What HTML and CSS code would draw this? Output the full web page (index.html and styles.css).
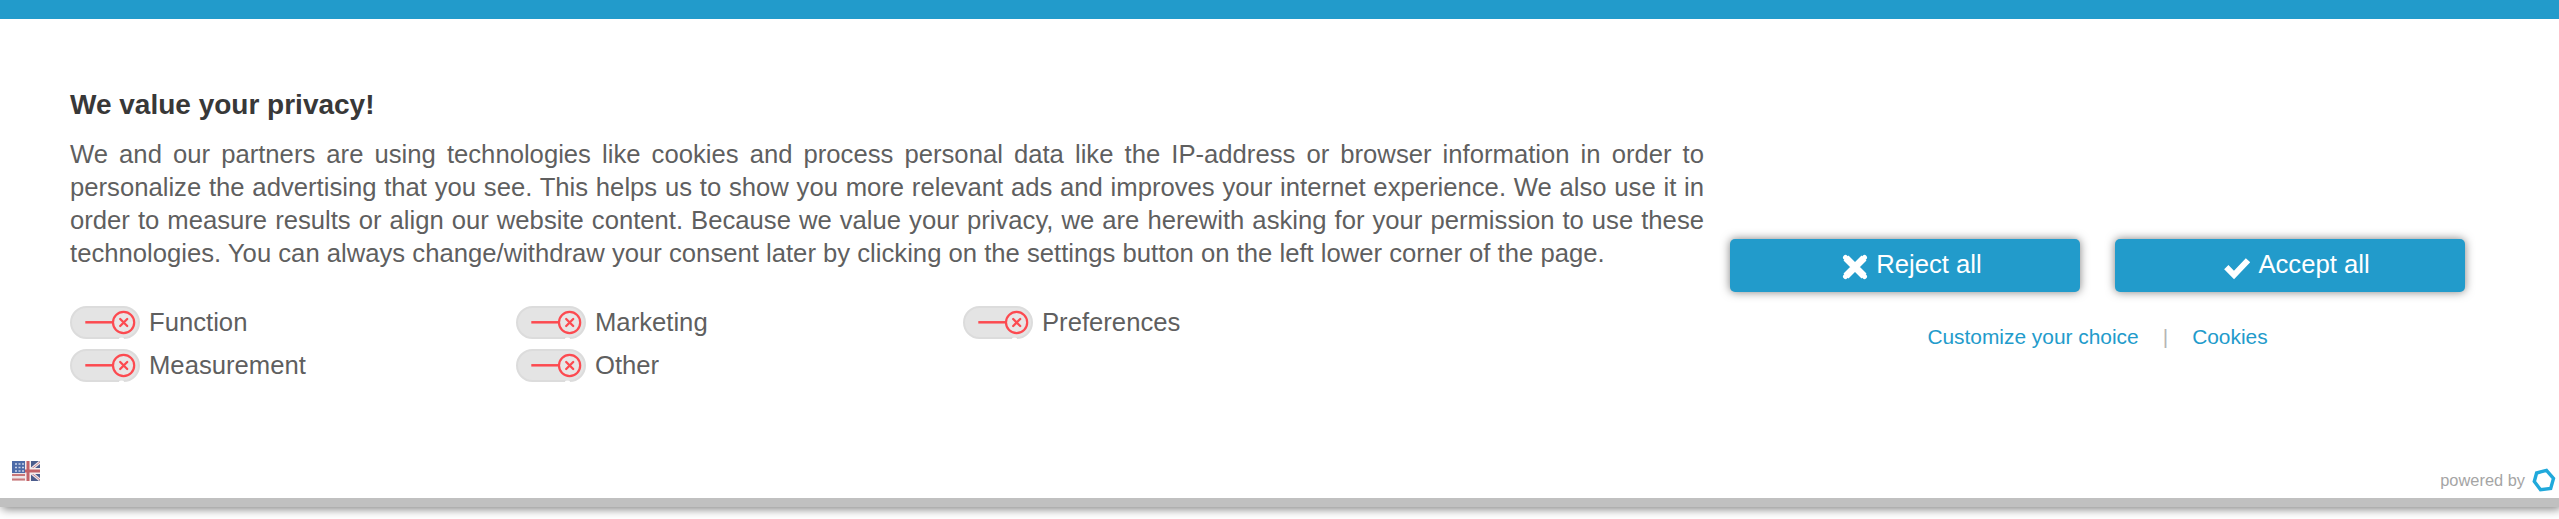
FILE: index.html
```html
<!DOCTYPE html>
<html lang="en">
<head>
<meta charset="utf-8">
<title>Privacy</title>
<link rel="stylesheet" href="styles.css">
</head>
<body>
<svg width="0" height="0" class="defs">
  <symbol id="toggle" viewBox="0 0 70 33">
    <rect x="1" y="1" width="68" height="31" rx="15.5" fill="#e4e4e4" stroke="#dcdcdc" stroke-width="2"/>
    <ellipse cx="51.5" cy="32.6" rx="2.5" ry="1.2" fill="#fff"/>
    <path d="M15.3 16.3H43" stroke="#fc4a50" stroke-width="2.5"/>
    <circle cx="53.6" cy="16.5" r="10.6" fill="#e8e6e6" stroke="#fc4a50" stroke-width="2.2"/>
    <path d="M50.2 13l7 7m0-7l-7 7" stroke="#fc4a50" stroke-width="2.3" stroke-linecap="round"/>
  </symbol>
</svg>
<section class="banner">
  <div class="content">
    <div class="info">
      <h1 class="title">We value your privacy!</h1>
      <p class="text">We and our partners are using technologies like cookies and process personal data like the IP-address or browser information in order to personalize the advertising that you see. This helps us to show you more relevant ads and improves your internet experience. We also use it in order to measure results or align our website content. Because we value your privacy, we are herewith asking for your permission to use these technologies. You can always change/withdraw your consent later by clicking on the settings button on the left lower corner of the page.</p>
      <div class="purposes">
        <div class="purpose"><svg class="toggle"><use href="#toggle"/></svg><span>Function</span></div>
        <div class="purpose"><svg class="toggle"><use href="#toggle"/></svg><span>Marketing</span></div>
        <div class="purpose"><svg class="toggle"><use href="#toggle"/></svg><span>Preferences</span></div>
        <div class="purpose"><svg class="toggle"><use href="#toggle"/></svg><span>Measurement</span></div>
        <div class="purpose"><svg class="toggle"><use href="#toggle"/></svg><span>Other</span></div>
      </div>
    </div>
    <div class="actions">
      <div class="buttons">
        <a class="button"><svg class="icon" viewBox="0 0 26 26"><path d="M4 4l18 18M22 4L4 22" stroke="#fff" stroke-width="7"/><path d="M3.500 3.500l19 19M22.500 3.500l-19 19" stroke="#fff" stroke-width="5" stroke-linecap="round"/></svg><span>Reject all</span></a>
        <a class="button"><svg class="icon" viewBox="0 0 26 26"><path d="M2.300 13.200l7.700 7.800L24 6.200" fill="none" stroke="#fff" stroke-width="6"/></svg><span>Accept all</span></a>
      </div>
      <div class="links"><a>Customize your choice</a><span class="divider">|</span><a>Cookies</a></div>
    </div>
  </div>
  <div class="footer">
    <svg class="flag" viewBox="0 0 28 20">
      <rect width="28" height="20" fill="#f0e6e8"/>
      <rect width="13" height="12" fill="#4d6ba8"/>
      <path d="M3 3h9M3 6.500h9M3 10h9" stroke="#c9d3e8" stroke-width="1.500" stroke-dasharray="2 1.500"/>
      <path d="M0 14h14M0 18.500h14" stroke="#c97779" stroke-width="2"/>
      <path d="M17 0h11v20H17z" fill="#4b5c8c"/>
      <path d="M17 10L28 1M17 10l11 9" stroke="#efe5ea" stroke-width="3"/>
      <path d="M17 10L28 1M17 10l11 9" stroke="#c98990" stroke-width="1"/>
      <path d="M16 0v20M13 10h15" stroke="#f5eeee" stroke-width="6"/>
      <path d="M16 0v20M13 10h15" stroke="#c46268" stroke-width="3"/>
    </svg>
    <div class="powered"><span>powered by</span><svg class="logo" viewBox="0 0 24 24"><path d="M4.600 5L14.500 2.400 21.500 10.500 18.700 20.500 8.500 21.700 2.300 13.500z" fill="none" stroke="#20a9db" stroke-width="3.400"/></svg></div>
  </div>
</section>
</body>
</html>
```
FILE: styles.css
```css
* { box-sizing: border-box; }
body {
  margin: 0;
  height: 519px;
  overflow: hidden;
  background: #fff;
  color: #5f5f5f;
  font: 25.66px/33px "Liberation Sans", Arial, sans-serif;
}
.defs { position: absolute; }
.banner {
  display: flex;
  flex-direction: column;
  justify-content: space-between;
  height: 507px;
  border-top: 19px solid #229bcb;
  border-bottom: 9px solid #c0c0c0;
  box-shadow: 2px 2px 9px rgba(0, 0, 0, .5);
}
.content {
  display: flex;
  padding: 69px 0 0 70px;
}
.info { width: 1634px; }
.title {
  margin: 0 0 17px;
  font-size: 28px;
  line-height: 33px;
  color: #383838;
}
.text { margin: 0 0 36px; text-align: justify; }
.purposes {
  display: grid;
  grid-template-columns: 446px 447px 446px;
  grid-auto-rows: 43px;
}
.purpose { display: flex; gap: 9px; }
.toggle { width: 70px; height: 33px; }
.actions { width: 735px; margin: 151px 0 0 26px; }
.buttons { display: flex; gap: 35px; }
.button {
  display: flex;
  justify-content: center;
  gap: 8px;
  width: 350px;
  height: 53px;
  padding: 9px 0 0 14px;
  border-radius: 5px;
  background: #229bcb;
  color: #fff;
  box-shadow: 0 0 10px rgba(0, 0, 0, .5);
}
.icon { width: 26px; height: 26px; margin-top: 6px; }
.links {
  display: flex;
  justify-content: center;
  margin-top: 29px;
  font-size: 20.9px;
  color: #229bcb;
  line-height: 32px;
}
.divider { margin: 0 24px; color: #b5b5b5; }
.footer {
  display: flex;
  justify-content: space-between;
  align-items: flex-end;
  padding: 0 3px 5px 12px;
}
.flag { width: 28px; height: 20px; margin-bottom: 12px; }
.powered {
  display: flex;
  align-items: center;
  gap: 7px;
  font-size: 16.4px;
  line-height: 26px;
  color: #a5a5a5;
}
.logo { width: 24px; height: 24px; }
```
